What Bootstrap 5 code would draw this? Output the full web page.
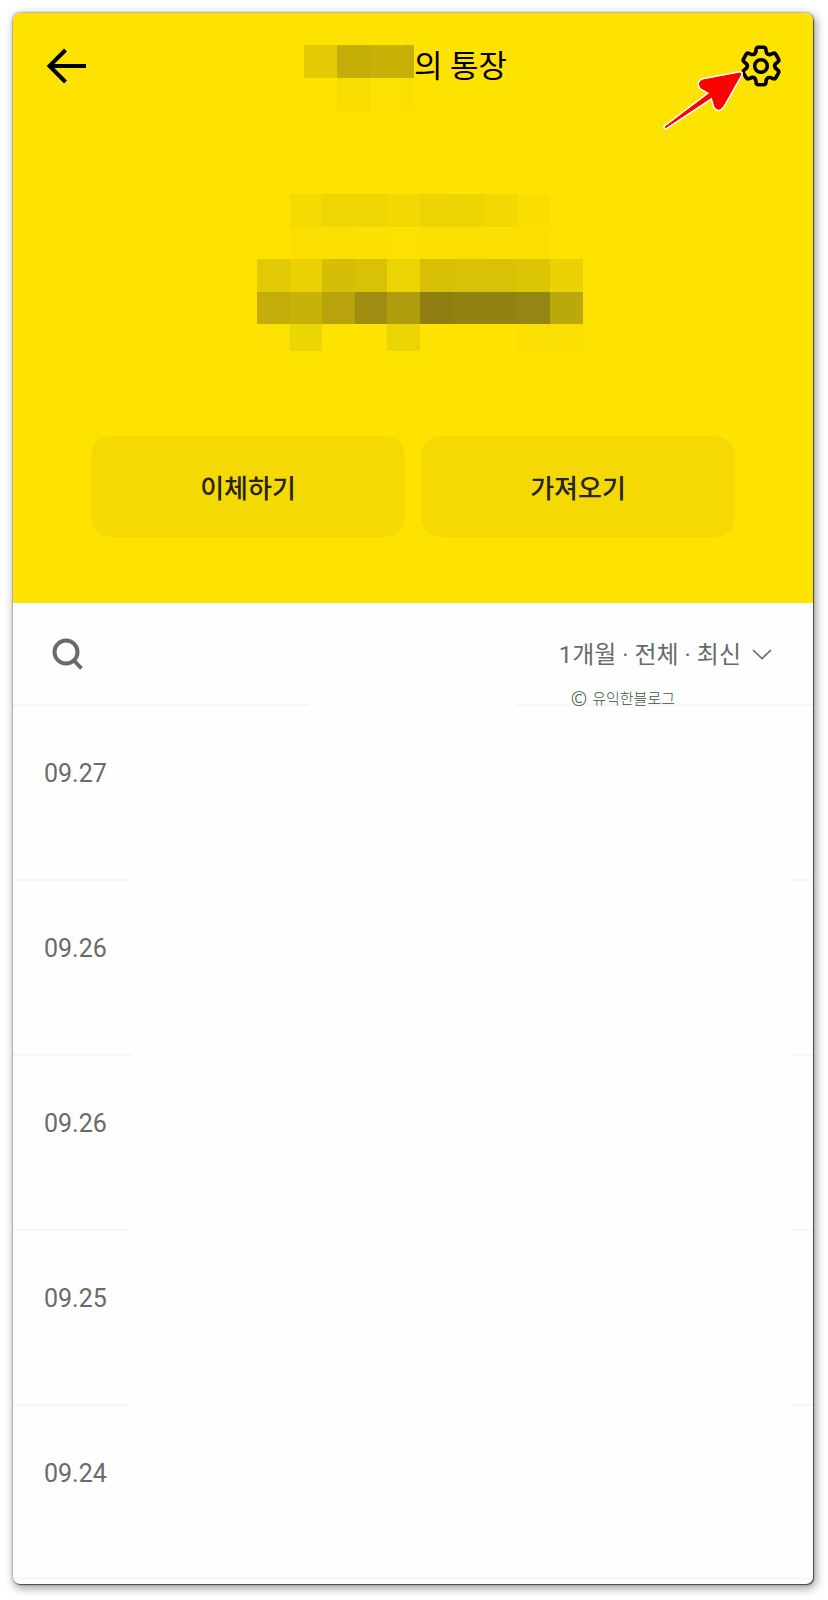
<!DOCTYPE html>
<html lang="ko">
<head>
<meta charset="utf-8">
<meta name="viewport" content="width=device-width, initial-scale=1">
<title>통장</title>
<link href="https://cdn.jsdelivr.net/npm/bootstrap@5.3.0/dist/css/bootstrap.min.css" rel="stylesheet">
<style>
  body { font-family: Roboto, "Noto Sans CJK KR", sans-serif; background: #fff; }
  .screen { margin: 13px 15px 15px 13px; border-radius: 7px; background: #fefefe; overflow: hidden;
    box-shadow: 0 0 1px 1px rgba(0,0,0,.2), 1px 1px 1px 0 rgba(0,0,0,.5), 2px 3px 10px 1px rgba(0,0,0,.4); }
  .account { background: #fee300; padding-bottom: 66px; }
  .topbar { height: 106px; padding: 0 31px 0 32px; }
  .icon-btn { width: 42px; height: 42px; }
  .account-title { font-size: 31px; line-height: 40px; font-weight: 400; color: #000; }
  .account-title span { padding-top: 2px; }
  .name-mask { width: 110px; height: 66px; margin-top: 24px; }
  .pointer { left: -80px; top: 22px; z-index: 2; pointer-events: none; }
  .balance { height: 317px; padding: 75px 0 0 14px; }
  .actions { padding: 0 78px; gap: 16px; }
  .action-btn { height: 101px; padding: 5px 0 0; border-radius: 20px; background: #f5d904; color: #26230a;
    font-size: 26px; font-weight: 500; }
  .action-btn:hover { background: #ecd104; color: #26230a; }
  .filterbar { height: 103px; padding: 0 41px 0 37px;
    background: linear-gradient(90deg, #f6f6f6 37%, transparent 37% 63%, #f6f6f6 63%) bottom / 100% 2px no-repeat; }
  .filter-btn { color: #6a6a6a; font-size: 24px; line-height: 32px; gap: 11px; }
  .credit { right: 138px; bottom: -4px; gap: 5px; font-family: "Noto Sans CJK KR", sans-serif; font-size: 15px; line-height: 24px;
    font-weight: 300; color: #35573a; }
  .credit-sign { font-size: 20px; }
  .entry { height: 175px; padding: 52px 31px 0; font-size: 25px; line-height: 32px; color: #6a6a6a;
    background: linear-gradient(90deg, #f6f6f6 118px, transparent 118px calc(100% - 23px), #f6f6f6 calc(100% - 23px)) bottom / 100% 2px no-repeat; }
  .entry:last-child { height: 173px; background: none; border-bottom: 1px solid #f2f2f2; }
  .entries { padding-bottom: 5px; }
</style>
</head>
<body>
<main class="screen">
  <section class="account">
    <header class="topbar d-flex align-items-center justify-content-between">
      <button type="button" class="icon-btn btn p-0 border-0 d-flex" aria-label="뒤로">
        <svg width="42" height="42" viewBox="0 0 42 42" fill="none" stroke="#000" stroke-width="4"><path d="M41 21H6M20.500 5 4.500 21 20.500 37"/></svg>
      </button>
      <h1 class="account-title d-flex align-items-center mb-0 me-3">
        <svg class="name-mask" viewBox="0 0 110 66" shape-rendering="crispEdges" aria-hidden="true">
          <path fill="#e2cb05" d="M0 0h33v33H0z"/><path fill="#c4ae08" d="M33 0h33v33H33z"/><path fill="#c8b208" d="M66 0h33v33H66z"/><path fill="#c6b008" d="M99 0h11v33H99z"/>
          <path fill="#f9dd02" d="M33 33h33v33H33z"/><path fill="#fde101" d="M66 33h33v33H66z"/><path fill="#fadf02" d="M99 33h11v33H99z"/>
        </svg>
        <span>의 통장</span>
      </h1>
      <div class="position-relative">
        <button type="button" class="icon-btn btn p-0 border-0 d-flex" aria-label="설정">
          <svg width="42" height="42" viewBox="-21 -21 42 42" fill="none" stroke="#000" stroke-width="3.600" stroke-linecap="round">
            <defs><path id="tooth" d="M-5.300-14L-5-16Q-4.800-18.700-2.500-18.700H2.500Q4.800-18.700 5-16L5.300-14Q6.300-10.800 9.470-11.590"/></defs>
            <use href="#tooth"/><use href="#tooth" transform="rotate(60)"/><use href="#tooth" transform="rotate(120)"/><use href="#tooth" transform="rotate(180)"/><use href="#tooth" transform="rotate(240)"/><use href="#tooth" transform="rotate(300)"/>
            <circle r="6.300"/>
          </svg>
        </button>
        <svg class="pointer position-absolute" width="84" height="64" viewBox="0 0 84 64" aria-hidden="true">
          <path d="M5 60 50 26 41 21Q37 15 43 13L80 6Q82 6 80 9L63 39Q59 45 55 40L52 30 6 60.500Z" fill="#f00" stroke="#fff" stroke-width="4" stroke-linejoin="round"/>
          <path d="M5 60 50 26 41 21Q37 15 43 13L80 6Q82 6 80 9L63 39Q59 45 55 40L52 30 6 60.500Z" fill="#f00" stroke="#f00" stroke-width="1"/>
        </svg>
      </div>
    </header>
    <div class="balance d-flex justify-content-center align-items-start">
      <svg width="326" height="158" viewBox="0 0 326 158" shape-rendering="crispEdges" aria-hidden="true">
        <g transform="scale(32.600)">
          <path fill="#f3da03" d="M1 0h1v1H1z"/><path fill="#eed504" d="M2 0h2v1H2z"/><path fill="#f2d903" d="M4 0h1v1H4z"/><path fill="#ebd304" d="M5 0h1v1H5z"/><path fill="#edd504" d="M6 0h1v1H6z"/><path fill="#f2d903" d="M7 0h1v1H7z"/><path fill="#fade02" d="M8 0h1v1H8z"/>
          <path fill="#fbdf01" d="M1 1h2v1H1zM5 1h2v1H5z"/><path fill="#fce001" d="M3 1h1v1H3zM7 1h2v1H7z"/><path fill="#fde101" d="M4 1h1v1H4z"/>
          <path fill="#e1ca05" d="M0 2h1v1H0z"/><path fill="#e9d104" d="M1 2h1v1H1z"/><path fill="#d5bf06" d="M2 2h1v1H2z"/><path fill="#d9c206" d="M3 2h1v1H3z"/><path fill="#ecd304" d="M4 2h1v1H4z"/><path fill="#d6c006" d="M5 2h1v1H5z"/><path fill="#d8c106" d="M6 2h2v1H6z"/><path fill="#dcc505" d="M8 2h1v1H8z"/><path fill="#ead204" d="M9 2h1v1H9z"/>
          <path fill="#c2ad0a" d="M0 3h1v1H0z"/><path fill="#c7b209" d="M1 3h1v1H1z"/><path fill="#b8a30d" d="M2 3h1v1H2z"/><path fill="#9e8d10" d="M3 3h1v1H3z"/><path fill="#b09d0d" d="M4 3h1v1H4z"/><path fill="#8e7e12" d="M5 3h1v1H5z"/><path fill="#928212" d="M6 3h2v1H6z"/><path fill="#958512" d="M8 3h1v1H8z"/><path fill="#bba80c" d="M9 3h1v1H9z"/>
          <path fill="#fde100" d="M0 4h1v.820H0z"/><path fill="#ecd504" d="M1 4h1v.820H1z"/><path fill="#ebd404" d="M4 4h1v.820H4z"/><path fill="#fadf02" d="M8 4h2v.820H8z"/>
        </g>
      </svg>
    </div>
    <div class="actions d-flex">
      <button type="button" class="action-btn btn border-0 flex-fill w-50">이체하기</button>
      <button type="button" class="action-btn btn border-0 flex-fill w-50">가져오기</button>
    </div>
  </section>
  <div class="filterbar position-relative d-flex align-items-center justify-content-between">
    <button type="button" class="btn p-0 border-0 d-flex" aria-label="검색">
      <svg width="36" height="36" viewBox="0 0 36 36" fill="none" stroke="#6a6a6a" stroke-width="4"><circle cx="16" cy="15" r="11.500"/><path d="M23.500 23 31.500 31.500"/></svg>
    </button>
    <button type="button" class="filter-btn btn p-0 border-0 d-flex align-items-center">
      <span>1개월 · 전체 · 최신</span>
      <svg width="20" height="12" viewBox="0 0 20 12" fill="none" stroke="#6a6a6a" stroke-width="1.700"><path d="M1 1 10 9.500 19 1"/></svg>
    </button>
    <span class="credit position-absolute d-flex align-items-center"><span class="credit-sign">©</span> <span>유익한블로그</span></span>
  </div>
  <ul class="entries list-unstyled mb-0">
    <li class="entry">09.27</li>
    <li class="entry">09.26</li>
    <li class="entry">09.26</li>
    <li class="entry">09.25</li>
    <li class="entry">09.24</li>
  </ul>
</main>
<script src="https://cdn.jsdelivr.net/npm/bootstrap@5.3.0/dist/js/bootstrap.bundle.min.js"></script>
</body>
</html>
